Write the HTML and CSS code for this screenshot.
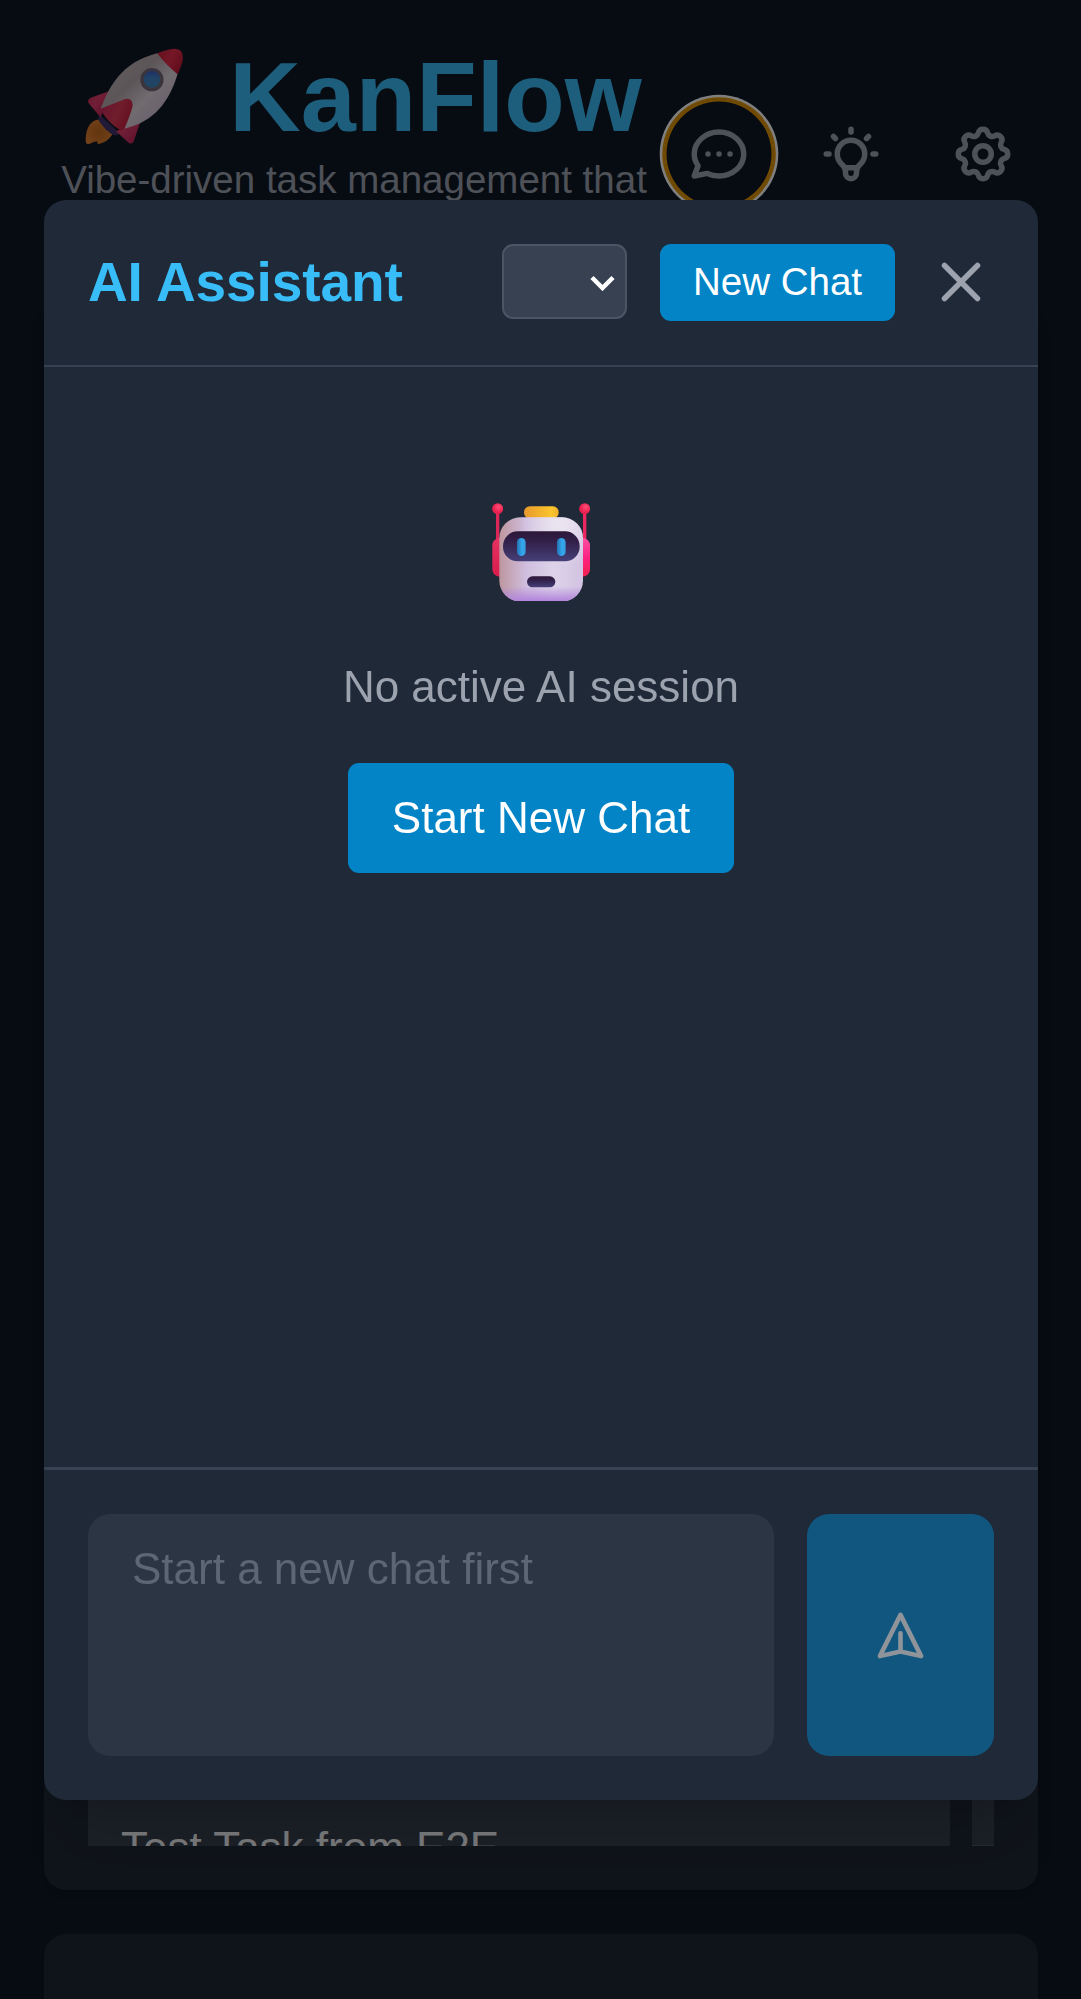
FILE: index.html
```html
<!DOCTYPE html>
<html lang="en">
<head>
<meta charset="utf-8">
<title>KanFlow</title>
<link rel="stylesheet" href="styles.css">
</head>
<body>
<div class="app">
  <header class="topbar">
    <div class="brand">
      <h1 class="brand-name">
        <svg class="rocket" viewBox="45 55 296 290" aria-hidden="true">
          <defs>
            <linearGradient id="hull" x1="0" y1="0" x2="1" y2="1"><stop offset="0" stop-color="#c5c0bd"/><stop offset=".4" stop-color="#b9abb1"/><stop offset=".6" stop-color="#e2d8e0"/><stop offset="1" stop-color="#c6abd0"/></linearGradient>
            <linearGradient id="nose" x1="0" y1="0" x2="1" y2=".6"><stop offset="0" stop-color="#c9203c"/><stop offset=".55" stop-color="#e82e4e"/><stop offset="1" stop-color="#c51a38"/></linearGradient>
            <linearGradient id="fin" x1="0" y1="0" x2="1" y2="1"><stop offset="0" stop-color="#c81e50"/><stop offset=".35" stop-color="#e03f6c"/><stop offset="1" stop-color="#c01d58"/></linearGradient>
            <linearGradient id="fin-front" x1="0" y1=".3" x2="1" y2=".7"><stop offset="0" stop-color="#d0265e"/><stop offset=".5" stop-color="#e03a58"/><stop offset="1" stop-color="#c91a42"/></linearGradient>
            <radialGradient id="flame"><stop offset="0" stop-color="#c56a1c"/><stop offset="1" stop-color="#e08030"/></radialGradient>
            <linearGradient id="glass" x1="0" y1="0" x2="0" y2="1"><stop offset="0" stop-color="#3a62d0"/><stop offset=".4" stop-color="#4585cc"/><stop offset="1" stop-color="#3f8bc4"/></linearGradient>
          </defs>
          <path fill="url(#flame)" d="M90 270C65 270 47 292 47 332Q47 343 53 344Q62 343 70 337L82 335Q80 345 86 343Q112 339 127 315Z"/>
          <path fill="#40346f" d="M88 254L84 270Q108 307 132 317Q142 319 150 312Z"/>
          <path fill="url(#fin)" d="M119 184L62 204Q52 209 55 219L92 264Z"/>
          <path fill="url(#fin)" d="M214 268L191 336Q186 345 177 340L138 305Z"/>
          <path fill="url(#hull)" d="M92 238C115 175 153 97 264 70L323 133C298 215 255 275 164 297Z"/>
          <path fill="url(#nose)" d="M262 71Q296 57 315 57Q340 58 339 86Q337 106 323 134Q286 104 262 71Z"/>
          <path fill="url(#fin-front)" d="M90 238L165 208Q188 203 188 227Q184 250 164 296L152 303Q112 278 90 238Z"/>
          <circle cx="246" cy="150" r="35" fill="#746b7b"/>
          <circle cx="246" cy="149" r="25" fill="url(#glass)"/>
        </svg>
        <span>KanFlow</span>
      </h1>
      <p class="tagline">Vibe-driven task management that</p>
    </div>
    <nav class="actions">
      <button class="icon-button icon-button-focused" aria-label="AI chat">
        <svg class="icon" viewBox="0 0 24 24"><path d="M8 12h.01M12 12h.01M16 12h.01M21 12c0 4.418-4.03 8-9 8a9.863 9.863 0 01-4.255-.949L3 20l1.395-3.72C3.512 15.042 3 13.574 3 12c0-4.418 4.03-8 9-8s9 3.582 9 8z"/></svg>
      </button>
      <button class="icon-button" aria-label="Tips">
        <svg class="icon" viewBox="0 0 24 24"><path d="M9.663 17h4.673M12 3v1m6.364 1.636l-.707.707M21 12h-1M4 12H3m3.343-5.657l-.707-.707m2.828 9.9a5 5 0 117.072 0l-.548.547A3.374 3.374 0 0014 18.469V19a2 2 0 11-4 0v-.531c0-.895-.356-1.754-.988-2.386l-.548-.547z"/></svg>
      </button>
      <button class="icon-button" aria-label="Settings">
        <svg class="icon" viewBox="0 0 24 24"><path d="M10.325 4.317c.426-1.756 2.924-1.756 3.35 0a1.724 1.724 0 002.573 1.066c1.543-.94 3.31.826 2.37 2.37a1.724 1.724 0 001.065 2.572c1.756.426 1.756 2.924 0 3.35a1.724 1.724 0 00-1.066 2.573c.94 1.543-.826 3.31-2.37 2.37a1.724 1.724 0 00-2.572 1.065c-.426 1.756-2.924 1.756-3.35 0a1.724 1.724 0 00-2.573-1.066c-1.543.94-3.31-.826-2.37-2.37a1.724 1.724 0 00-1.065-2.572c-1.756-.426-1.756-2.924 0-3.35a1.724 1.724 0 001.066-2.573c-.94-1.543.826-3.31 2.37-2.37.996.608 2.296.07 2.572-1.065z"/><path d="M15 12a3 3 0 11-6 0 3 3 0 016 0z"/></svg>
      </button>
    </nav>
  </header>
  <main class="board">
    <section class="column column-tall">
      <div class="tasks">
        <article class="task">Test Task from E2E</article>
        <article class="task task-next"></article>
      </div>
    </section>
    <section class="column column-rest"></section>
  </main>
</div>

<div class="backdrop">
  <div class="modal" role="dialog" aria-label="AI Assistant">
    <div class="modal-header">
      <h2 class="modal-title">AI Assistant</h2>
      <div class="modal-tools">
        <div class="picker" role="listbox" aria-label="Session">
          <svg class="chevron" viewBox="0 0 25 16"><path d="M2 2.5L12.5 13 23 2.5"/></svg>
        </div>
        <button class="button button-small">New Chat</button>
        <button class="close" aria-label="Close">
          <svg class="icon" viewBox="0 0 24 24"><path d="M6 18L18 6M6 6l12 12"/></svg>
        </button>
      </div>
    </div>
    <div class="modal-body">
      <svg class="robot" viewBox="66 38 294 296" aria-hidden="true">
        <defs>
          <linearGradient id="head" x1="0" y1="0" x2="1" y2="0"><stop offset="0" stop-color="#bd969d"/><stop offset=".32" stop-color="#d0bedf"/><stop offset=".65" stop-color="#ddd3e9"/><stop offset="1" stop-color="#d2c3e2"/></linearGradient>
          <linearGradient id="chin" x1="0" y1="0" x2="0" y2="1"><stop offset=".82" stop-color="#b183dc" stop-opacity="0"/><stop offset="1" stop-color="#b183dc"/></linearGradient>
          <radialGradient id="shine" cx=".75" cy=".08" r=".5"><stop offset="0" stop-color="#f0ebf3" stop-opacity=".8"/><stop offset="1" stop-color="#f0ebf3" stop-opacity="0"/></radialGradient>
          <linearGradient id="visor" x1="0" y1="0" x2="0" y2="1"><stop offset="0" stop-color="#2d1838"/><stop offset=".35" stop-color="#33204a"/><stop offset="1" stop-color="#454078"/></linearGradient>
          <linearGradient id="eye" x1="0" y1="0" x2="1" y2="0"><stop offset="0" stop-color="#2374b4"/><stop offset=".6" stop-color="#36a9ed"/><stop offset="1" stop-color="#3299db"/></linearGradient>
          <linearGradient id="cap" x1="0" y1="0" x2="1" y2="0"><stop offset="0" stop-color="#e7992c"/><stop offset=".8" stop-color="#fac52e"/><stop offset="1" stop-color="#eeb02b"/></linearGradient>
          <linearGradient id="ear-left" x1="0" y1="0" x2="0" y2="1"><stop offset="0" stop-color="#e53262"/><stop offset="1" stop-color="#db1b4d"/></linearGradient>
          <linearGradient id="ear-right" x1="0" y1="0" x2="0" y2="1"><stop offset="0" stop-color="#fb51a2"/><stop offset=".5" stop-color="#fc2383"/><stop offset="1" stop-color="#f91f4c"/></linearGradient>
          <radialGradient id="ball" cx=".6" cy=".35"><stop offset="0" stop-color="#ff4c76"/><stop offset="1" stop-color="#ea214f"/></radialGradient>
        </defs>
        <rect x="78" y="60" width="10" height="110" fill="#dc2658"/>
        <rect x="339" y="60" width="10" height="110" fill="#ed2861"/>
        <circle cx="83" cy="55" r="16.500" fill="url(#ball)"/>
        <circle cx="344" cy="55" r="16.500" fill="url(#ball)"/>
        <rect x="67" y="143" width="50" height="116" rx="22" fill="url(#ear-left)"/>
        <rect x="310" y="143" width="50" height="116" rx="22" fill="url(#ear-right)"/>
        <rect x="162" y="48" width="104" height="36" rx="17" fill="url(#cap)"/>
        <rect x="88" y="81" width="251" height="252" rx="62" fill="url(#head)"/>
        <rect x="88" y="81" width="251" height="252" rx="62" fill="url(#shine)"/>
        <rect x="88" y="81" width="251" height="252" rx="62" fill="url(#chin)"/>
        <rect x="99" y="123" width="230" height="90" rx="44" fill="url(#visor)"/>
        <rect x="141" y="143" width="26" height="54" rx="13" fill="url(#eye)"/>
        <rect x="261" y="143" width="26" height="54" rx="13" fill="url(#eye)"/>
        <rect x="171" y="258" width="85" height="33" rx="16.500" fill="url(#visor)"/>
      </svg>
      <p class="empty-text">No active AI session</p>
      <button class="button button-large">Start New Chat</button>
    </div>
    <div class="composer">
      <textarea class="composer-input" placeholder="Start a new chat first" disabled></textarea>
      <button class="send" aria-label="Send" disabled>
        <svg class="send-icon" viewBox="0 0 24 24"><path d="M12 19l9 2-9-18-9 18 9-2zm0 0v-8"/></svg>
      </button>
    </div>
  </div>
</div>
</body>
</html>
```
FILE: styles.css
```css
* {
  box-sizing: border-box;
  margin: 0;
  padding: 0;
}

body {
  height: 1999px;
  overflow: hidden;
  background: #0f1826;
  font-family: "Liberation Sans", Arial, sans-serif;
  font-size: 44px;
  line-height: 66px;
  color: #f3f4f6;
}

button,
textarea {
  border: 0;
  font: inherit;
}

svg {
  display: block;
  flex: none;
}

svg path {
  stroke-linecap: round;
  stroke-linejoin: round;
}

.app {
  display: flex;
  flex-direction: column;
  height: 1999px;
  padding: 0 43px 0 44px;
  overflow: hidden;
}

.topbar {
  display: flex;
  flex: none;
  height: 297px;
  padding-top: 42px;
}

.brand {
  flex: 1;
  text-align: center;
}

.brand-name {
  display: flex;
  align-items: center;
  justify-content: center;
  gap: 45.500px;
  padding-left: 19px;
  font-size: 99px;
  line-height: 110px;
  color: #38bdf8;
}

.rocket {
  width: 98.600px;
  height: 96.600px;
  margin-bottom: 1px;
}

.tagline {
  font-size: 38.500px;
  line-height: 55px;
  white-space: nowrap;
  color: #9ca3af;
}

.actions {
  display: flex;
  flex: none;
  gap: 22px;
  padding-top: 57px;
}

.icon-button {
  display: grid;
  place-items: center;
  width: 110px;
  height: 110px;
  border-radius: 50%;
  background: none;
  color: #9ca3af;
}

.icon-button-focused {
  box-shadow: inset 0 0 0 2.500px #e59700, 0 0 0 1.800px #e59700, 0 0 0 4.300px #fff;
}

.icon {
  width: 66px;
  height: 66px;
  fill: none;
  stroke: currentColor;
  stroke-width: 2;
}

.board {
  display: flex;
  flex-direction: column;
  gap: 44px;
}

.column {
  flex: none;
  padding: 44px;
  border-radius: 22px;
  background: #1f2835;
  box-shadow: 0 11px 17px -3px rgba(0, 0, 0, 0.1), 0 6px 11px -6px rgba(0, 0, 0, 0.1);
}

.column-tall {
  height: 1592.500px;
}

.column-rest {
  height: 300px;
}

.tasks {
  display: flex;
  gap: 22px;
  height: 1504.500px;
  overflow: hidden;
}

.task {
  flex: none;
  width: 862px;
  height: 1570px;
  padding: 1482px 33px 0;
  background: #37404e;
  line-height: 50px;
  color: #f3f4f6;
}

.task-next {
  height: 1504.500px;
  border-bottom: 1px solid #4b5563;
}

.backdrop {
  position: fixed;
  inset: 0;
  display: flex;
  align-items: center;
  justify-content: center;
  padding: 1px 43px 0 44px;
  background: rgba(0, 0, 0, 0.5);
}

.modal {
  display: flex;
  flex-direction: column;
  width: 100%;
  height: 1600px;
  border-radius: 22px;
  background: #1f2937;
  box-shadow: 0 55px 69px -14px rgba(0, 0, 0, 0.1), 0 22px 28px -16px rgba(0, 0, 0, 0.1);
}

.modal-header {
  display: flex;
  align-items: flex-start;
  justify-content: space-between;
  padding: 44px 44px 44px;
  border-bottom: 2.750px solid #374151;
}

.modal-title {
  font-size: 55px;
  line-height: 76px;
  letter-spacing: -0.100px;
  color: #38bdf8;
}

.modal-tools {
  display: flex;
  gap: 33px;
  height: 77px;
}

.picker {
  display: flex;
  align-items: center;
  justify-content: flex-end;
  width: 125px;
  height: 75px;
  padding-right: 10px;
  border: 2px solid #4b5563;
  border-radius: 11px;
  background: #374151;
}

.chevron {
  width: 25px;
  height: 16px;
  margin-top: 3px;
  fill: none;
  stroke: #fff;
  stroke-width: 4.500;
}

.chevron path {
  stroke-linecap: butt;
  stroke-linejoin: miter;
}

.button {
  border-radius: 11px;
  background: #0284c7;
  color: #fff;
}

.button-small {
  padding: 10px 33px 12px;
  font-size: 38.500px;
  line-height: 55px;
}

.button-large {
  padding: 22px 44px;
}

.close {
  display: grid;
  place-items: center;
  width: 66px;
  height: 75px;
  background: none;
  color: #9ca3af;
}

.modal-body {
  display: flex;
  flex: 1;
  flex-direction: column;
  align-items: center;
  padding-top: 135.500px;
}

.robot {
  width: 98px;
  height: 98.700px;
}

.empty-text {
  margin: 53px 0 43px;
  color: #9ca3af;
}

.composer {
  display: flex;
  gap: 33px;
  padding: 44px;
  border-top: 3px solid #374151;
}

.composer-input {
  flex: 1;
  height: 242px;
  padding: 22px 44px;
  border-radius: 22px;
  background: #374151;
  opacity: 0.5;
  resize: none;
}

.composer-input::placeholder {
  color: #9ca3af;
}

.send {
  display: grid;
  place-items: center;
  width: 187px;
  border-radius: 22px;
  background: #0284c7;
  color: #fff;
  opacity: 0.5;
}

.send-icon {
  width: 55px;
  height: 55px;
  fill: none;
  stroke: currentColor;
  stroke-width: 2;
}
```
